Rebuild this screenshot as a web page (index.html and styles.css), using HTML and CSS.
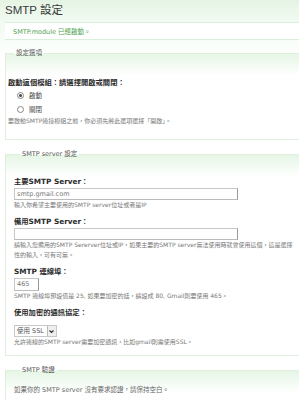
FILE: index.html
```html
<!DOCTYPE html>
<html lang="zh-Hant">
<head>
    <meta charset="UTF-8">
    <meta name="viewport" content="width=device-width, initial-scale=1.0">
    <title>SMTP 設定</title>
    <link rel="stylesheet" href="styles.css">
</head>
<body>
    <div class="pagina">
        <h1 class="titulo">SMTP 設定</h1>

        <div class="mensagem">SMTP.module 已經啟動。</div>

        <fieldset class="grupo grupo-opcoes">
            <legend>設定選項</legend>
            <div class="item">
                <div class="rotulo">啟動這個模組：請選擇開啟或關閉：</div>
                <label class="radio"><span class="bolinha marcada"></span>啟動</label>
                <label class="radio"><span class="bolinha"></span>關閉</label>
                <div class="descricao">要啟動SMTP連接模組之前，你必須先將此選項選擇「開啟」。</div>
            </div>
        </fieldset>

        <fieldset class="grupo grupo-server">
            <legend>SMTP server 設定</legend>
            <div class="item">
                <div class="rotulo">主要SMTP Server：</div>
                <div class="campo campo-largo">smtp.gmail.com</div>
                <div class="descricao">輸入你希望主要使用的SMTP server位址或者是IP</div>
            </div>
            <div class="item">
                <div class="rotulo">備用SMTP Server：</div>
                <div class="campo campo-largo"></div>
                <div class="descricao">請輸入您備用的SMTP Sererver位址或IP，如果主要的SMTP server無法使用時就會使用這個，這是選擇性的輸入，可有可無。</div>
            </div>
            <div class="item">
                <div class="rotulo">SMTP 連線埠：</div>
                <div class="campo campo-curto">465</div>
                <div class="descricao">SMTP 連線埠預設值是 25, 如果要加密的話，請設成 80, Gmail則要使用 465。</div>
            </div>
            <div class="item">
                <div class="rotulo">使用加密的通訊協定：</div>
                <div class="seletor">
                    <span class="seletor-texto">使用 SSL</span>
                    <span class="seletor-seta">
                        <svg width="7" height="7" viewBox="0 0 7 7"><path d="M1.5 2.5 L3.5 4.5 L5.5 2.5" fill="none" stroke="#333" stroke-width="1.2"/></svg>
                    </span>
                </div>
                <div class="descricao">允許連線的SMTP server需要加密通訊，比如gmail則需使用SSL。</div>
            </div>
        </fieldset>

        <fieldset class="grupo grupo-auth">
            <legend>SMTP 驗證</legend>
            <div class="texto-auth">如果你的 SMTP server 沒有要求認證，請保持空白。</div>
        </fieldset>
    </div>
</body>
</html>
```

FILE: styles.css
```css
* {
    margin: 0;
    padding: 0;
    box-sizing: border-box;
}

html {
    overflow: hidden;
}

body {
    font-family: 'DejaVu Sans', 'Noto Sans CJK TC', sans-serif;
    color: #333;
    background: linear-gradient(#e4f4e4, #f1faf1 20px, #fff 60px);
}

.pagina {
    width: 340px;
}

.titulo {
    font-family: 'Liberation Sans', 'Noto Sans CJK TC', sans-serif;
    font-weight: normal;
    font-size: 11.5px;
    line-height: 14px;
    color: #3a3a3a;
    padding: 3px 0 0 5px;
    height: 22px;
}

.mensagem {
    margin-left: 5px;
    height: 18px;
    line-height: 18px;
    padding-left: 8px;
    background-color: #fff;
    border-top: 1px solid #d9efd9;
    border-bottom: 1px solid #d9efd9;
    color: #4f9f4f;
    font-size: 6.5px;
}

.grupo {
    margin-left: 5px;
    border: 1px solid #dfeedf;
    border-right: none;
    background: linear-gradient(#e6f6e6, #fff 22px);
}

.grupo legend {
    margin-left: 6px;
    padding: 0 2px;
    font-size: 6.5px;
    line-height: 8px;
    color: #555;
}

.grupo-opcoes {
    margin-top: 9px;
    padding: 21px 0 13px 2px;
}

.grupo-server {
    margin-top: 10px;
    padding: 19px 0 8px 8px;
}

.grupo-auth {
    margin-top: 10px;
    padding: 11px 0 20px 8px;
}

.item {
    margin-bottom: 7px;
}

.item:last-child {
    margin-bottom: 0;
}

.rotulo {
    font-weight: bold;
    font-size: 7.3px;
    line-height: 10px;
    color: #2a2a2a;
}

.radio {
    display: flex;
    align-items: center;
    gap: 5px;
    height: 14px;
    padding-left: 9px;
    font-size: 6.5px;
    color: #444;
}

.bolinha {
    width: 7px;
    height: 7px;
    border: 1px solid #888;
    border-radius: 50%;
    background: #fff;
    display: flex;
    align-items: center;
    justify-content: center;
}

.bolinha.marcada::after {
    content: "";
    width: 3px;
    height: 3px;
    border-radius: 50%;
    background: #444;
}

.descricao {
    font-size: 6px;
    line-height: 10px;
    color: #777;
    max-width: 280px;
}

.campo {
    margin-top: 1px;
    height: 12px;
    line-height: 10px;
    border: 1px solid #c8c8c8;
    border-right-color: #999;
    border-bottom-color: #bbb;
    background: #fff;
    padding-left: 2px;
    font-size: 6.5px;
    color: #777;
}

.campo-largo {
    width: 224px;
}

.campo-curto {
    width: 25px;
    height: 13px;
    line-height: 11px;
}

.seletor {
    margin-top: 1px;
    display: inline-flex;
    align-items: stretch;
    height: 12px;
    border: 1px solid #c8c8c8;
    background: #fff;
}

.seletor-texto {
    font-size: 6.5px;
    line-height: 10px;
    color: #555;
    padding: 0 3px 0 2px;
}

.seletor-seta {
    width: 9px;
    border-left: 1px solid #bbb;
    background: #eee;
    display: flex;
    align-items: center;
    justify-content: center;
}

.texto-auth {
    font-size: 6.5px;
    line-height: 10px;
    color: #666;
}
```
